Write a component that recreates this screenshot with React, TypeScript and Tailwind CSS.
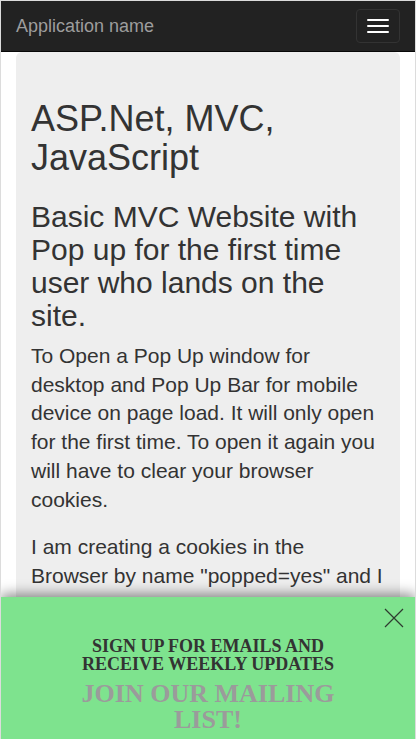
import { useState } from "react";

const sans = { fontFamily: '"Liberation Sans", Arial, sans-serif' };
const serif = { fontFamily: '"Liberation Serif", "Times New Roman", serif' };

function Navbar() {
  return (
    <nav className="flex h-[51px] items-start justify-between border-b border-[#080808] bg-[#222222] px-[15px]">
      <a className="mt-[15px] text-[18px] leading-[20px] text-[#9d9d9d]">Application name</a>
      <button className="mt-[8px] flex h-[34px] w-[44px] flex-col items-center justify-center gap-[4px] rounded-[4px] border border-[#333333]">
        <span className="block h-[2px] w-[22px] rounded-[1px] bg-white" />
        <span className="block h-[2px] w-[22px] rounded-[1px] bg-white" />
        <span className="block h-[2px] w-[22px] rounded-[1px] bg-white" />
      </button>
    </nav>
  );
}

function MailingBar({ onClose }: { onClose: () => void }) {
  return (
    <div className="absolute inset-x-0 bottom-0 h-[142px] bg-[#7ee38e] shadow-[0_-3px_12px_rgba(0,0,0,0.45)]">
      <button onClick={onClose} className="absolute right-[11px] top-[11px] h-[20px] w-[20px]">
        <svg viewBox="0 0 20 20" width="20" height="20">
          <path d="M1 1 L19 19 M19 1 L1 19" stroke="#2e3b30" strokeWidth="1.2" fill="none" />
        </svg>
      </button>
      <div className="mx-auto w-[280px] pt-[40px] text-center" style={serif}>
        <h3 className="text-[18px] font-bold leading-[18px] text-[#333333]">
          SIGN UP FOR EMAILS AND RECEIVE WEEKLY UPDATES
        </h3>
        <h2 className="mt-[8px] text-[26px] font-bold leading-[26px] text-[#9b9b9b]">
          JOIN OUR MAILING LIST!
        </h2>
      </div>
    </div>
  );
}

export default function App() {
  const [open, setOpen] = useState(true);

  return (
    <div
      className="relative h-[739px] overflow-hidden border-x border-t border-[#dcdcdc] bg-white text-[#333333]"
      style={sans}
    >
      <Navbar />
      <div className="px-[15px]">
        <div className="rounded-t-[6px] bg-[#eeeeee] px-[15px] pb-[48px] pt-[47px]">
          <h1 className="mb-[23px] text-[36px] leading-[39px]">ASP.Net, MVC, JavaScript</h1>
          <h2 className="mb-[10px] text-[30px] leading-[33px]">
            Basic MVC Website with Pop up for the first time user who lands on the site.
          </h2>
          <p className="mb-[19px] text-[21px] leading-[28.7px]">
            To Open a Pop Up window for desktop and Pop Up Bar for mobile device on page load. It will only
            open for the first time. To open it again you will have to clear your browser cookies.
          </p>
          <p className="mb-[16px] text-[21px] leading-[28.7px]">
            I am creating a cookies in the Browser by name "popped=yes" and I check if the cookie is present
            on page load. If it is not there, the pop up is shown.
          </p>
        </div>
      </div>
      {open && <MailingBar onClose={() => setOpen(false)} />}
    </div>
  );
}
